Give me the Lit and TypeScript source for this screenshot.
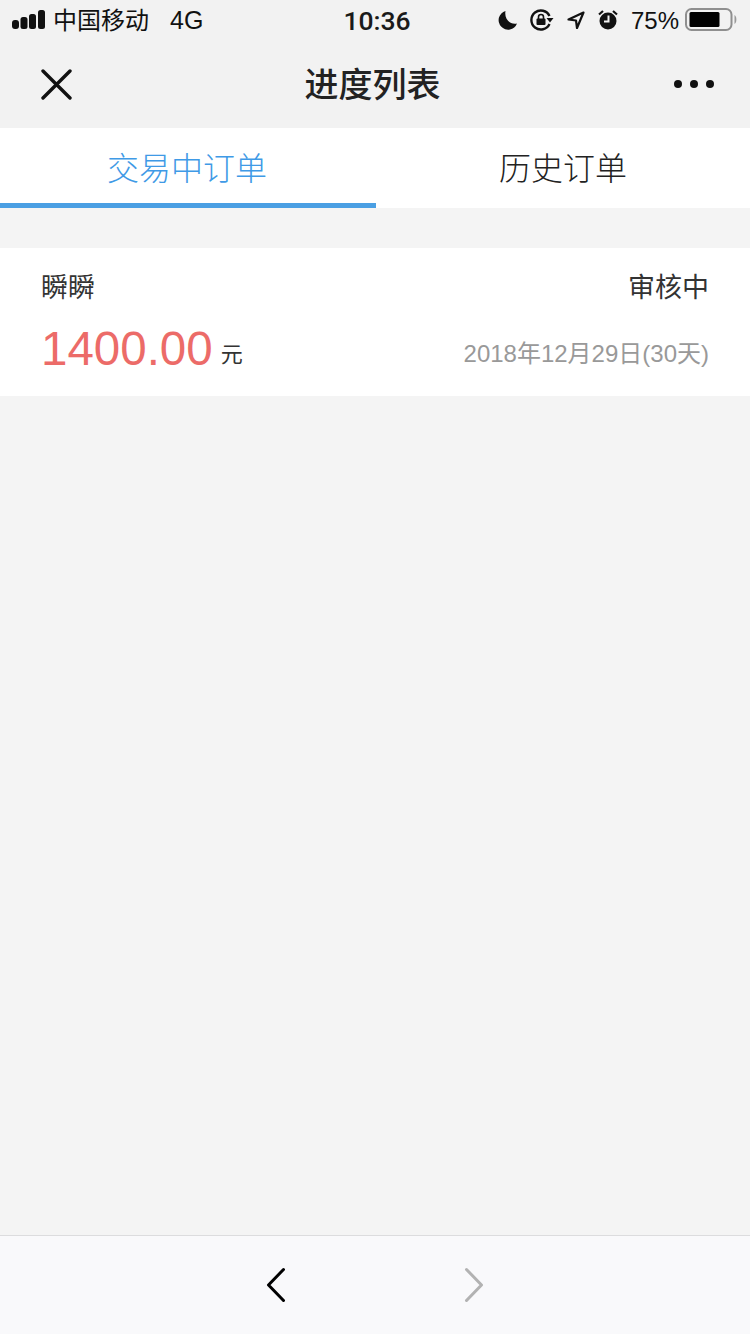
import { LitElement, css, html } from "lit";
import { customElement } from "lit/decorators.js";

@customElement("app-root")
export class AppRoot extends LitElement {
  static styles = css`
    :host {
      display: flex;
      flex-direction: column;
      height: 1334px;
      background: #f4f4f4;
      color: #333;
      font-family: "Liberation Sans", "Noto Sans CJK SC", sans-serif;
    }

    .status {
      height: 40px;
      flex: none;
      display: grid;
      grid-template-columns: 1fr auto 1fr;
      align-items: center;
      background: #f2f2f2;
      color: #111;
      font-size: 24px;
      padding: 0 12px;
    }

    .status-left,
    .status-right {
      display: flex;
      align-items: center;
    }

    .status-right {
      justify-content: flex-end;
    }

    .carrier {
      margin-left: 7px;
      padding-bottom: 3px;
    }

    .net {
      margin-left: 21px;
      font-size: 25px;
      padding-top: 1px;
    }

    .time {
      font-family: Roboto, sans-serif;
      font-weight: 500;
      font-size: 26.5px;
      color: #1a1a1a;
      padding-top: 1px;
      margin-left: 4px;
    }

    .battery-text {
      margin-left: 13px;
      padding-top: 1px;
    }

    .nav {
      height: 88px;
      flex: none;
      display: flex;
      align-items: center;
      justify-content: space-between;
      background: #f2f2f2;
      padding: 0 35px 0 41px;
    }

    .nav-title {
      font-size: 34px;
      font-weight: 500;
      color: #222;
      padding-bottom: 4px;
    }

    .tabs {
      height: 80px;
      flex: none;
      display: grid;
      grid-template-columns: 376px 1fr;
      background: #fff;
    }

    .tab {
      display: flex;
      align-items: center;
      justify-content: center;
      font-size: 32px;
      font-weight: 300;
      color: #222;
      padding-bottom: 5px;
    }

    .tab.active {
      color: #3f9ae6;
      padding: 0 2px 0 0;
      border-bottom: 5px solid #4a9fe3;
    }

    .order {
      margin-top: 40px;
      height: 148px;
      flex: none;
      box-sizing: border-box;
      background: #fff;
      padding: 20px 41px;
      display: flex;
      flex-direction: column;
      gap: 17px;
    }

    .row {
      display: flex;
      justify-content: space-between;
    }

    .name {
      font-size: 27px;
      line-height: 40px;
    }

    .amount-row {
      align-items: baseline;
    }

    .amount {
      font-size: 47.5px;
      line-height: 48px;
      color: #ec6b68;
      vertical-align: -3px;
    }

    .unit {
      font-size: 22px;
      margin-left: 8px;
    }

    .date {
      font-size: 24px;
      color: #999;
    }

    .spacer {
      flex: 1;
    }

    .toolbar {
      height: 99px;
      flex: none;
      box-sizing: border-box;
      border-top: 1px solid #dcdcde;
      background: #f9f9fb;
      display: flex;
      align-items: center;
      justify-content: center;
      gap: 178px;
    }

    svg {
      display: block;
      flex: none;
    }

    .gap {
      margin-left: 12px;
    }
  `;

  render() {
    return html`
      <div class="status">
        <div class="status-left">
          <svg width="34" height="20" viewBox="0 0 34 20" fill="#111">
            <rect x="0" y="10" width="7" height="9" rx="3" />
            <rect x="8.500" y="7" width="7" height="12" rx="2.500" />
            <rect x="17" y="4" width="7" height="15" rx="2.500" />
            <rect x="26" y="0" width="7" height="19" rx="2.500" />
          </svg>
          <span class="carrier">中国移动</span>
          <span class="net">4G</span>
        </div>
        <div class="time">10:36</div>
        <div class="status-right">
          <svg width="20" height="20" viewBox="0 0 20 20">
            <path d="M7.500 1a9.500 9.500 0 1 0 11.500 12.500C12 15 6 9 7.500 1z" fill="#111" />
          </svg>
          <svg class="gap" width="24" height="22" viewBox="0 0 24 22" fill="none">
            <path d="M19.500 15a9.500 9.500 0 1 1 0-8" stroke="#111" stroke-width="2.400" />
            <path d="M16.500 9h7l-3.500 4.500z" fill="#111" />
            <rect x="6.500" y="9.500" width="9" height="6.500" rx="1" fill="#111" />
            <path d="M8.500 10V8a2.500 2.500 0 0 1 5 0v2" stroke="#111" stroke-width="1.600" />
          </svg>
          <svg class="gap" width="20" height="20" viewBox="0 0 20 20" fill="none">
            <path d="M17.500 2.500 2.500 9.500l7.500 1 1 7.500z" stroke="#111" stroke-width="2.200" stroke-linejoin="round" />
          </svg>
          <svg class="gap" width="20" height="22" viewBox="0 0 20 22">
            <circle cx="10" cy="12" r="8.500" fill="#111" />
            <path d="M10.500 6.500v6H6" stroke="#f2f2f2" stroke-width="2" fill="none" />
            <path d="M1 5.500l4-3.500M19 5.500l-4-3.500" stroke="#111" stroke-width="2.200" />
          </svg>
          <span class="battery-text">75%</span>
          <svg style="margin-left:6px" width="53" height="24" viewBox="0 0 53 24">
            <rect x="1" y="1" width="45.500" height="21" rx="5.500" fill="none" stroke="#8f8f8f" stroke-width="2" />
            <rect x="4.500" y="4" width="30" height="15" rx="1.500" fill="#000" />
            <path d="M49.500 7c2.500 1.500 2.500 7.500 0 9z" fill="#999" />
          </svg>
        </div>
      </div>
      <div class="nav">
        <svg width="31" height="31" viewBox="0 0 31 31">
          <path d="M2 2l27 27M29 2 2 29" stroke="#111" stroke-width="3.400" stroke-linecap="round" />
        </svg>
        <div class="nav-title">进度列表</div>
        <svg width="42" height="12" viewBox="0 0 42 12" fill="#111">
          <circle cx="5" cy="6" r="4" />
          <circle cx="21" cy="6" r="4" />
          <circle cx="37" cy="6" r="4" />
        </svg>
      </div>
      <div class="tabs">
        <div class="tab active">交易中订单</div>
        <div class="tab">历史订单</div>
      </div>
      <div class="order">
        <div class="row">
          <span class="name">瞬瞬</span>
          <span class="name">审核中</span>
        </div>
        <div class="row amount-row">
          <span><span class="amount">1400.00</span><span class="unit">元</span></span>
          <span class="date">2018年12月29日(30天)</span>
        </div>
      </div>
      <div class="spacer"></div>
      <div class="toolbar">
        <svg width="20" height="36" viewBox="0 0 20 36" fill="none">
          <path d="M17.500 2.500 2.500 18l15 15.500" stroke="#000" stroke-width="3" stroke-linecap="round" stroke-linejoin="round" />
        </svg>
        <svg width="20" height="36" viewBox="0 0 20 36" fill="none">
          <path d="M2.500 2.500 17.500 18l-15 15.500" stroke="#b2b2b2" stroke-width="3" stroke-linecap="round" stroke-linejoin="round" />
        </svg>
      </div>
    `;
  }
}
